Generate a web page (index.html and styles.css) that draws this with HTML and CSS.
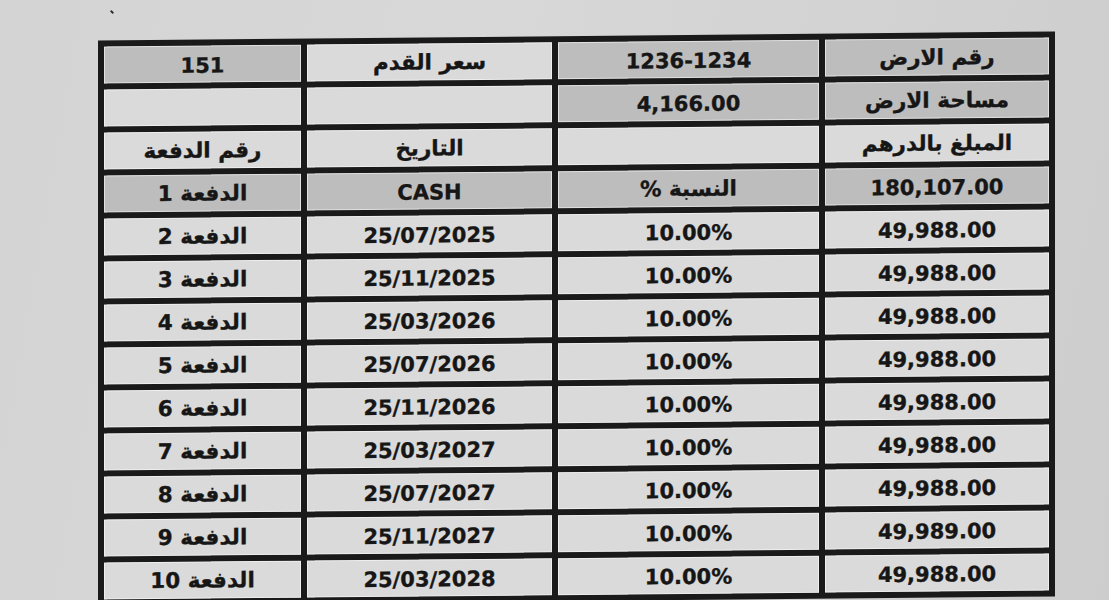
FILE: index.html
```html
<!DOCTYPE html>
<html lang="ar">
<head>
<meta charset="utf-8">
<title>جدول الدفعات</title>
<link rel="stylesheet" href="styles.css">
</head>
<body>
<div class="paper">
  <span class="speck"></span>
  <table class="schedule" dir="rtl">
    <colgroup>
      <col class="c-amount"><col class="c-pct"><col class="c-date"><col class="c-num">
    </colgroup>
    <tbody>
      <tr>
        <td class="dark ar">رقم الارض</td>
        <td class="dark">1236-1234</td>
        <td class="ar">سعر القدم</td>
        <td class="dark">151</td>
      </tr>
      <tr>
        <td class="dark ar">مساحة الارض</td>
        <td class="dark">4,166.00</td>
        <td></td>
        <td></td>
      </tr>
      <tr>
        <td class="ar">المبلغ بالدرهم</td>
        <td></td>
        <td class="ar">التاريخ</td>
        <td class="ar">رقم الدفعة</td>
      </tr>
      <tr>
        <td class="dark">180,107.00</td>
        <td class="dark ar">النسبة %</td>
        <td class="dark">CASH</td>
        <td class="dark ar">الدفعة 1</td>
      </tr>
      <tr><td>49,988.00</td><td>10.00%</td><td>25/07/2025</td><td class="ar">الدفعة 2</td></tr>
      <tr><td>49,988.00</td><td>10.00%</td><td>25/11/2025</td><td class="ar">الدفعة 3</td></tr>
      <tr><td>49,988.00</td><td>10.00%</td><td>25/03/2026</td><td class="ar">الدفعة 4</td></tr>
      <tr><td>49,988.00</td><td>10.00%</td><td>25/07/2026</td><td class="ar">الدفعة 5</td></tr>
      <tr><td>49,988.00</td><td>10.00%</td><td>25/11/2026</td><td class="ar">الدفعة 6</td></tr>
      <tr><td>49,988.00</td><td>10.00%</td><td>25/03/2027</td><td class="ar">الدفعة 7</td></tr>
      <tr><td>49,988.00</td><td>10.00%</td><td>25/07/2027</td><td class="ar">الدفعة 8</td></tr>
      <tr><td>49,989.00</td><td>10.00%</td><td>25/11/2027</td><td class="ar">الدفعة 9</td></tr>
      <tr><td>49,988.00</td><td>10.00%</td><td>25/03/2028</td><td class="ar">الدفعة 10</td></tr>
    </tbody>
  </table>
</div>
</body>
</html>
```
FILE: styles.css
```css
html, body {
  margin: 0;
  height: 100%;
}
body {
  background: linear-gradient(100deg, #d4d4d4 0%, #d8d8d8 40%, #d2d2d2 75%, #cdcdcd 100%);
  overflow: hidden;
  font-family: "DejaVu Sans", sans-serif;
}
.paper {
  position: relative;
  padding: 36px 0 0 98px;
}
.speck {
  position: absolute;
  left: 110px;
  top: 11px;
  width: 4px;
  height: 2px;
  background: #2a2a2a;
  border-radius: 2px;
  transform: rotate(40deg);
}
.schedule {
  width: 957px;
  border-collapse: separate;
  border-spacing: 6px;
  background: #1a1a1a;
  table-layout: fixed;
  transform: skewY(-0.55deg);
  transform-origin: 50% 50%;
}
.c-amount { width: 224px; }
.c-pct { width: 261px; }
.c-date { width: 245px; }
.c-num { width: 197px; }
.schedule td {
  height: 37px;
  padding: 3px 0 0;
  box-sizing: border-box;
  background: #dadada;
  box-shadow: inset 0 0 0 1px rgba(255, 255, 255, 0.55);
  color: #161616;
  font-size: 21px;
  font-weight: bold;
  -webkit-text-stroke: 0.35px #161616;
  text-align: center;
  vertical-align: middle;
  line-height: 1;
  white-space: nowrap;
}
.schedule td.ar {
  font-size: 21.5px;
  padding-top: 0;
}
.schedule td.dark {
  background: #bdbdbd;
}
```
